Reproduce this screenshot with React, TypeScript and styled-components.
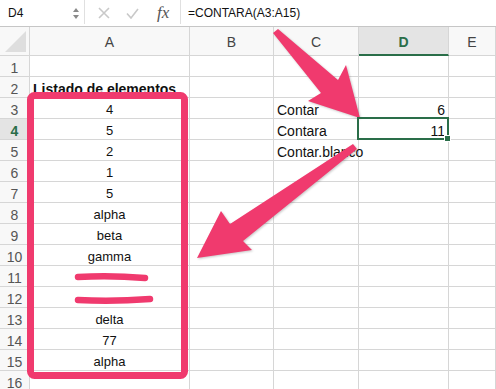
import React from "react";
import styled, { createGlobalStyle } from "styled-components";

const GREEN = "#2a6e49";
const PINK = "#f03a6e";
const GRID = "#d6d6d6";

const GlobalStyle = createGlobalStyle`
  html, body {
    margin: 0;
    padding: 0;
    background: #fff;
  }
  body {
    font-family: "Liberation Sans", Arial, sans-serif;
    color: #111;
  }
`;

const Page = styled.div`
  position: relative;
  width: 496px;
  height: 389px;
  overflow: hidden;
  background: #fff;
`;

const FormulaBar = styled.div`
  display: flex;
  align-items: center;
  height: 26px;
  border-bottom: 1px solid #c6c6c6;
  font-size: 12px;
`;

const NameBox = styled.div`
  width: 84px;
  box-sizing: border-box;
  display: flex;
  align-items: center;
  justify-content: space-between;
  padding: 0 4px 0 8px;
  color: #111;
`;

const Spinner = styled.div`
  display: flex;
  flex-direction: column;
  gap: 3px;
  width: 7px;
`;

const Tri = styled.span<{ $down?: boolean }>`
  width: 0;
  height: 0;
  border-left: 3.5px solid transparent;
  border-right: 3.5px solid transparent;
  ${(p) =>
    p.$down
      ? `border-top: 4px solid #8a8a8a;`
      : `border-bottom: 4px solid #8a8a8a;`}
`;

const Divider = styled.div`
  width: 1px;
  align-self: stretch;
  margin: 0 0 2px;
  background: #e0e0e0;
`;

const BarIcons = styled.div`
  display: flex;
  align-items: center;
  width: 95px;
  gap: 16px;
  padding-left: 13px;
  box-sizing: border-box;
`;

const Fx = styled.span`
  font-family: "Liberation Serif", "Times New Roman", serif;
  font-style: italic;
  font-size: 17px;
  color: #555;
  margin-left: 2px;
`;

const FormulaText = styled.div`
  padding-left: 7px;
  color: #111;
`;

const Sheet = styled.div`
  display: grid;
  grid-template-columns: 30px 160px 84px 85px 90px 1fr;
  grid-template-rows: 29px;
  grid-auto-rows: 21px;
`;

const Corner = styled.div`
  position: relative;
  background: #f8f8f8;
  border-right: 1px solid ${GRID};
  border-bottom: 1px solid ${GRID};
  &::after {
    content: "";
    position: absolute;
    right: 3px;
    bottom: 3px;
    width: 21px;
    height: 21px;
    background: #dedede;
    clip-path: polygon(100% 0, 100% 100%, 0 100%);
  }
`;

const ColHead = styled.div<{ $active?: boolean }>`
  display: flex;
  align-items: center;
  justify-content: center;
  background: ${(p) => (p.$active ? "#e4e4e4" : "#f8f8f8")};
  border-right: 1px solid ${GRID};
  border-bottom: ${(p) => (p.$active ? `2px solid ${GREEN}` : `1px solid ${GRID}`)};
  color: ${(p) => (p.$active ? GREEN : "#444")};
  font-weight: ${(p) => (p.$active ? 700 : 400)};
  font-size: 14px;
  padding-top: 2px;
`;

const RowHead = styled.div<{ $active?: boolean }>`
  display: flex;
  align-items: flex-end;
  justify-content: center;
  line-height: 16px;
  box-sizing: border-box;
  background: ${(p) => (p.$active ? "#e4e4e4" : "#f8f8f8")};
  border-right: 1px solid ${GRID};
  border-bottom: 1px solid ${GRID};
  color: ${(p) => (p.$active ? GREEN : "#555")};
  font-weight: ${(p) => (p.$active ? 700 : 400)};
  font-size: 14px;
`;

const Cell = styled.div<{ $align?: string; $small?: boolean; $bold?: boolean; $selected?: boolean }>`
  position: relative;
  display: flex;
  align-items: flex-end;
  justify-content: ${(p) =>
    p.$align === "right" ? "flex-end" : p.$align === "center" ? "center" : "flex-start"};
  padding: 0 3px;
  line-height: 16px;
  box-sizing: border-box;
  border-right: 1px solid ${GRID};
  border-bottom: 1px solid ${GRID};
  font-size: ${(p) => (p.$small ? 13 : 14)}px;
  font-weight: ${(p) => (p.$bold ? 700 : 400)};
  white-space: nowrap;
  overflow: visible;
  z-index: ${(p) => (p.$selected ? 2 : "auto")};
  ${(p) =>
    p.$selected &&
    `
    &::after {
      content: "";
      position: absolute;
      left: -2px;
      top: -2px;
      right: -1px;
      bottom: -1px;
      border: 2px solid ${GREEN};
    }
    &::before {
      content: "";
      position: absolute;
      right: -3px;
      bottom: -3px;
      width: 5px;
      height: 5px;
      background: ${GREEN};
      border: 1px solid #fff;
      z-index: 1;
    }
  `}
`;

const Overlay = styled.svg`
  position: absolute;
  left: 0;
  top: 0;
  pointer-events: none;
`;

const Arrow = styled.polygon`
  fill: ${PINK};
  filter: drop-shadow(1px 1px 1px rgba(0, 0, 0, 0.22));
`;

const Strike = styled.path`
  fill: none;
  stroke: ${PINK};
  stroke-width: 6.5;
  stroke-linecap: round;
`;

type Row = { a?: string; c?: string; d?: string; head?: boolean };

const rows: Row[] = [
  {},
  { a: "Listado de elementos", head: true },
  { a: "4", c: "Contar", d: "6" },
  { a: "5", c: "Contara", d: "11" },
  { a: "2", c: "Contar.blanco" },
  { a: "1" },
  { a: "5" },
  { a: "alpha" },
  { a: "beta" },
  { a: "gamma" },
  {},
  {},
  { a: "delta" },
  { a: "77" },
  { a: "alpha" },
  {},
];

const columns = ["A", "B", "C", "D", "E"];

export default function App() {
  return (
    <Page>
      <GlobalStyle />
      <FormulaBar>
        <NameBox>
          <span>D4</span>
          <Spinner>
            <Tri />
            <Tri $down />
          </Spinner>
        </NameBox>
        <Divider />
        <BarIcons>
          <svg width="12" height="12" viewBox="0 0 12 12">
            <path d="M1 1 L11 11 M11 1 L1 11" stroke="#c9c9c9" strokeWidth="1.6" />
          </svg>
          <svg width="13" height="11" viewBox="0 0 13 11">
            <path d="M1 5.5 L5 10 L12 1" stroke="#c9c9c9" strokeWidth="1.6" fill="none" />
          </svg>
          <Fx>fx</Fx>
        </BarIcons>
        <Divider />
        <FormulaText>=CONTARA(A3:A15)</FormulaText>
      </FormulaBar>

      <Sheet>
        <Corner />
        {columns.map((c) => (
          <ColHead key={c} $active={c === "D"}>
            {c}
          </ColHead>
        ))}
        {rows.map((r, i) => {
          const n = i + 1;
          return (
            <React.Fragment key={n}>
              <RowHead $active={n === 4}>{n}</RowHead>
              <Cell $align={r.head ? "left" : "center"} $small={!r.head} $bold={r.head}>
                {r.a}
              </Cell>
              <Cell />
              <Cell>{r.c}</Cell>
              <Cell $align="right" $selected={n === 4}>
                {r.d}
              </Cell>
              <Cell />
            </React.Fragment>
          );
        })}
      </Sheet>

      <Overlay width="496" height="389" viewBox="0 0 496 389">
        <rect
          x="30.5"
          y="95.5"
          width="154"
          height="280"
          rx="4"
          fill="none"
          stroke={PINK}
          strokeWidth="7"
        />
        <Strike d="M78 277 Q110 275 145 278" />
        <Strike d="M78 300 Q112 302 150 299" strokeWidth={7} />
        <Arrow points="273,33 278,29 338,80 346,65 360,118 308,101 321,93" />
        <Arrow points="353,144 357,149 243,241 252,250 197,258 221,211 230,224" />
      </Overlay>
    </Page>
  );
}
